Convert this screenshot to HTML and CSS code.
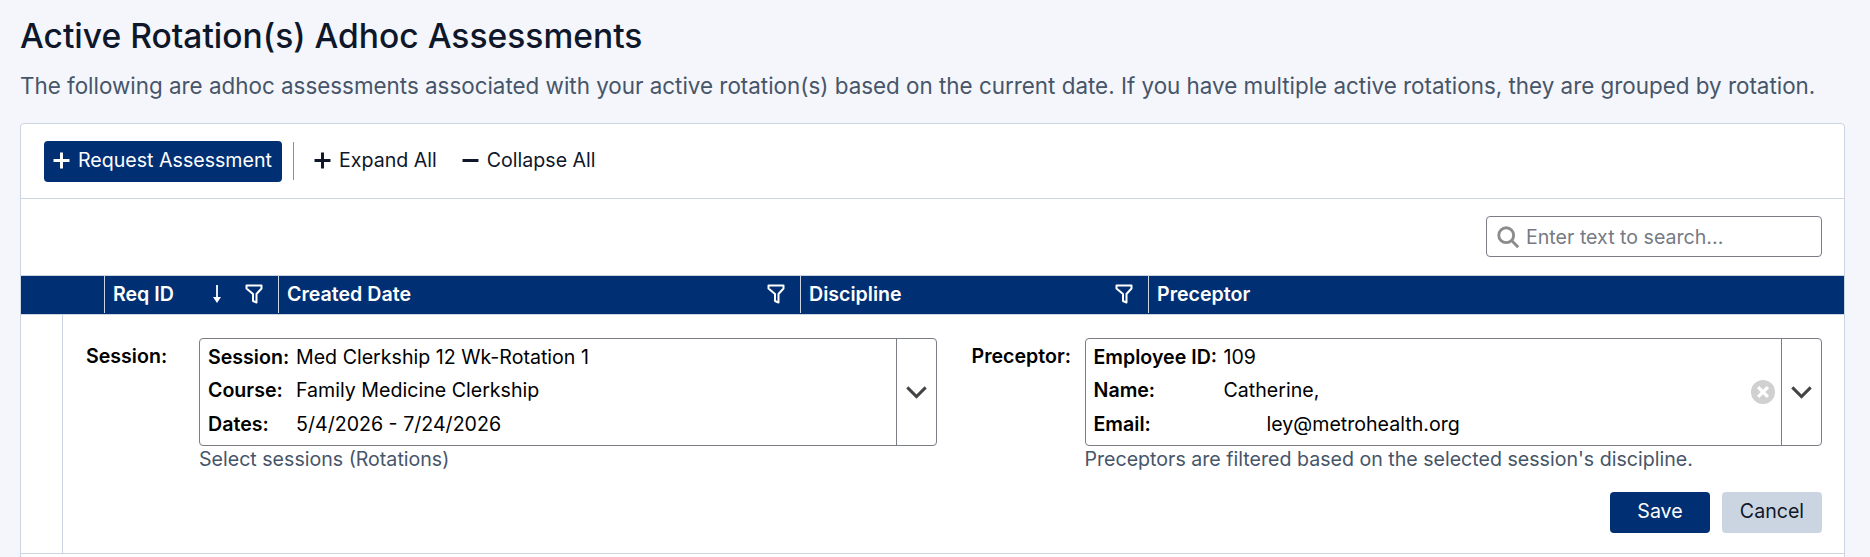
FILE: index.html
```html
<!DOCTYPE html>
<html>
	<head>
		<meta charset="UTF-8">
		<title>Active Rotation(s) Adhoc Assessments</title>
		<link rel="stylesheet" href="styles.css">
	</head>
	<body>
		<h1 class="title">Active Rotation(s) Adhoc Assessments</h1>
		<p class="intro">The following are adhoc assessments associated with your active rotation(s) based on the current date. If you have multiple active rotations, they are grouped by rotation.</p>
		<div class="panel">
			<div class="toolbar">
				<button class="btn btn-primary btn-request">
					<svg class="ico" viewBox="0 0 16 16"><path d="M8 .5v15M.5 8h15"/></svg>
					Request Assessment
				</button>
				<span class="tool-sep"></span>
				<button class="btn btn-link">
					<svg class="ico" viewBox="0 0 16 16"><path d="M8 .5v15M.5 8h15"/></svg>
					Expand All
				</button>
				<button class="btn btn-link">
					<svg class="ico" viewBox="0 0 16 16"><path d="M.5 8h15"/></svg>
					Collapse All
				</button>
			</div>
			<div class="search-row">
				<div class="search">
					<svg class="search-ico" viewBox="0 0 20 20"><circle cx="8.5" cy="8.5" r="6.2"/><path d="M13 13l5.5 5.5"/></svg>
					<span>Enter text to search...</span>
				</div>
			</div>
			<div class="grid-head">
				<div class="col col-expand"></div>
				<div class="col col-id">
					<span class="col-name">Req ID</span>
					<svg class="sort-ico" viewBox="0 0 12 20"><path d="M6 1v14"/><path class="fill" d="M2 13h8l-4 6z"/></svg>
					<svg class="filter-ico" viewBox="0 0 18 20"><path d="M1.5 1.5h15v3l-5 5.5v8.5l-3.500-1.500v-7l-6.500-5.500z"/></svg>
				</div>
				<div class="col col-date">
					<span class="col-name">Created Date</span>
					<svg class="filter-ico" viewBox="0 0 18 20"><path d="M1.5 1.5h15v3l-5 5.500v8.500l-3.500-1.500v-7l-6.500-5.500z"/></svg>
				</div>
				<div class="col col-disc">
					<span class="col-name">Discipline</span>
					<svg class="filter-ico" viewBox="0 0 18 20"><path d="M1.5 1.5h15v3l-5 5.500v8.500l-3.500-1.500v-7l-6.500-5.500z"/></svg>
				</div>
				<div class="col col-prec">
					<span class="col-name">Preceptor</span>
				</div>
			</div>
			<div class="edit-row">
				<div class="edit-gutter"></div>
				<div class="edit-body">
					<div class="form-cols">
						<div class="field">
							<label class="field-label">Session:</label>
							<div>
								<div class="select">
									<div class="select-value session-value">
										<b>Session:</b><span>Med Clerkship 12 Wk-Rotation 1</span>
										<b>Course:</b><span>Family Medicine Clerkship</span>
										<b>Dates:</b><span>5/4/2026 - 7/24/2026</span>
									</div>
									<div class="select-arrow">
										<svg class="chev" viewBox="0 0 20 12"><path d="M2 2l8 8 8-8"/></svg>
									</div>
								</div>
								<p class="hint">Select sessions (Rotations)</p>
							</div>
						</div>
						<div class="field">
							<label class="field-label">Preceptor:</label>
							<div>
								<div class="select">
									<div class="select-value preceptor-value">
										<b>Employee ID:</b><span>109</span>
										<b>Name:</b><span>Catherine,</span>
										<b>Email:</b><span class="email">ley@metrohealth.org</span>
									</div>
									<div class="select-clear">
										<svg class="clear-ico" viewBox="0 0 22 22"><circle class="fill" cx="11" cy="11" r="11"/><path d="M6.500 6.500l9 9M15.500 6.500l-9 9"/></svg>
									</div>
									<div class="select-arrow">
										<svg class="chev" viewBox="0 0 20 12"><path d="M2 2l8 8 8-8"/></svg>
									</div>
								</div>
								<p class="hint">Preceptors are filtered based on the selected session's discipline.</p>
							</div>
						</div>
					</div>
					<div class="form-actions">
						<button class="btn btn-primary btn-action">Save</button>
						<button class="btn btn-cancel btn-action">Cancel</button>
					</div>
				</div>
			</div>
		</div>
	</body>
</html>
```

FILE: styles.css
```css
*{
	box-sizing: border-box;
}
body{
	margin: 0;
	padding: 16px 25px 0 20px;
	height: 557px;
	overflow: hidden;
	background: #f4f6fb;
	font-family: Inter, "Liberation Sans", sans-serif;
	font-size: 19.6px;
	color: #0f172a;
}
.title{
	margin: 0;
	font-size: 33.6px;
	line-height: 40px;
	font-weight: 500;
	color: #0f172a;
}
.intro{
	margin: 14px 0 0;
	font-size: 22.4px;
	line-height: 32px;
	white-space: nowrap;
	color: #475569;
}
.panel{
	margin-top: 21px;
	background: #fff;
	border: 1px solid #cbd5e1;
	border-radius: 4px 4px 0 0;
	height: 440px;
}
.btn{
	border: 0;
	font-family: inherit;
	font-size: 19.6px;
	cursor: pointer;
}
.btn-primary{
	background: #003073;
	color: #fff;
}
.toolbar{
	display: flex;
	align-items: center;
	height: 75px;
	padding: 0 23px;
	border-bottom: 1px solid #cbd5e1;
}
.btn-request{
	display: flex;
	align-items: center;
	gap: 8px;
	width: 238px;
	height: 41px;
	padding: 0 9px 2px;
	border-radius: 4px;
	white-space: nowrap;
}
.ico{
	width: 17px;
	height: 17px;
	fill: none;
	stroke: currentColor;
	stroke-width: 2.800;
	flex: none;
}
.tool-sep{
	width: 1px;
	height: 38px;
	margin: 0 12px 0 11px;
	background: #8a8f98;
}
.btn-link{
	display: flex;
	align-items: center;
	gap: 8px;
	height: 41px;
	padding: 0 8px 2px;
	margin-right: 9px;
	background: none;
	color: #0f172a;
	white-space: nowrap;
}
.search-row{
	display: flex;
	justify-content: flex-end;
	height: 76px;
	padding: 17px 22px 0 0;
}
.search{
	display: flex;
	align-items: center;
	gap: 6px;
	width: 336px;
	height: 41px;
	padding: 0 9px;
	border: 1px solid #7a7d85;
	border-radius: 4px;
	color: #767a83;
}
.search-ico{
	width: 24px;
	height: 24px;
	fill: none;
	stroke: #8c8c8c;
	stroke-width: 2.400;
}
.grid-head{
	display: flex;
	height: 40px;
	padding-bottom: 1px;
	background: #003073;
	border-top: 1px solid #cbd5e1;
	border-bottom: 1px solid #cbd5e1;
	color: #fff;
	font-weight: 600;
}
.col{
	display: flex;
	align-items: center;
	padding: 0 15px 1px 8px;
	border-right: 1px solid #cbd5e1;
}
.col-expand{
	width: 84px;
}
.col-id{
	width: 174px;
}
.col-date{
	width: 522px;
}
.col-disc{
	width: 348px;
}
.col-prec{
	flex: 1;
	border-right: 0;
}
.col-name{
	flex: 1;
}
.sort-ico{
	width: 12px;
	height: 20px;
	margin-right: 22px;
	fill: none;
	stroke: #fff;
	stroke-width: 1.800;
}
.sort-ico .fill{
	fill: #fff;
	stroke: none;
}
.filter-ico{
	width: 18px;
	height: 20px;
	fill: none;
	stroke: #fff;
	stroke-width: 2;
	stroke-linejoin: round;
}
.edit-row{
	display: flex;
	height: 239px;
	border-bottom: 1px solid #cbd5e1;
}
.edit-gutter{
	width: 42px;
	border-right: 1px solid #cbd5e1;
}
.edit-body{
	flex: 1;
	padding: 23px 22px 0 23px;
}
.form-cols{
	display: grid;
	grid-template-columns: 1fr 1fr;
	column-gap: 35px;
}
.field{
	display: grid;
	grid-template-columns: 113px 1fr;
}
.field-label{
	font-weight: 600;
	line-height: 36px;
	color: #000;
}
.select{
	display: flex;
	height: 108px;
	border: 1px solid #7a7d85;
	border-radius: 4px;
	color: #000;
}
.select-value{
	flex: 1;
	display: grid;
	grid-auto-rows: 33.500px;
	align-items: center;
	column-gap: 5px;
	padding: 1px 8px 0;
}
.select-value b{
	font-weight: 600;
}
.session-value{
	grid-template-columns: 83px 1fr;
}
.preceptor-value{
	grid-template-columns: 125px 1fr;
}
.email{
	margin-left: 43px;
}
.select-clear{
	display: flex;
	align-items: center;
	padding-right: 6px;
}
.clear-ico{
	width: 24px;
	height: 24px;
}
.clear-ico .fill{
	fill: #d0d0d0;
}
.clear-ico path{
	fill: none;
	stroke: #fff;
	stroke-width: 3;
}
.select-arrow{
	display: flex;
	align-items: center;
	justify-content: center;
	width: 40px;
	border-left: 1px solid #7a7d85;
}
.chev{
	width: 23px;
	height: 14px;
	fill: none;
	stroke: #444;
	stroke-width: 2.600;
}
.hint{
	margin: 0;
	font-size: 19.6px;
	line-height: 26px;
	color: #475569;
}
.form-actions{
	display: flex;
	justify-content: flex-end;
	gap: 12px;
	margin-top: 20px;
}
.btn-action{
	width: 100px;
	height: 41px;
	padding: 0 0 3px;
	border-radius: 4px;
}
.btn-cancel{
	background: #cbd5e1;
	color: #0f172a;
}
```
